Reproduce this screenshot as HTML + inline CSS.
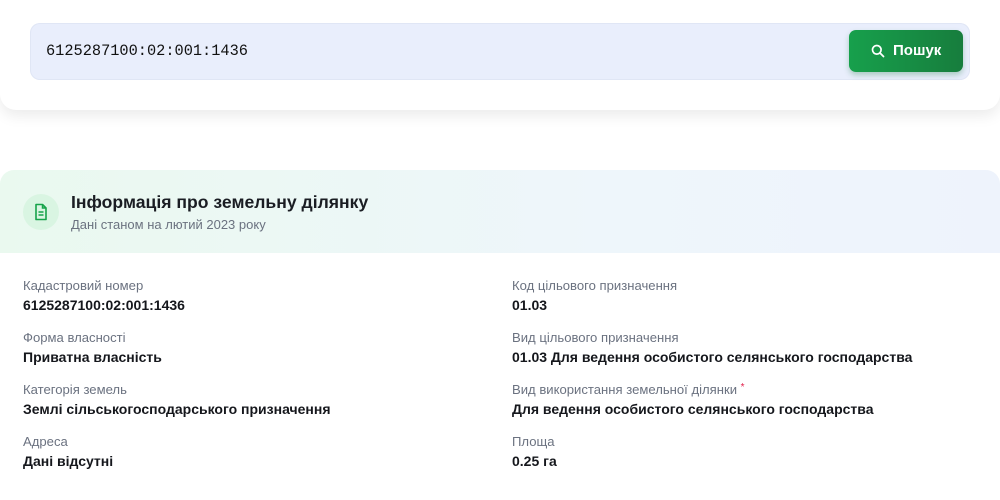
<!DOCTYPE html>
<html><head><meta charset="utf-8"><style>
*{margin:0;padding:0;box-sizing:border-box}
body{width:1000px;height:483px;overflow:hidden;background:#fff;font-family:"Liberation Sans",sans-serif;position:relative}
.top{position:absolute;left:0;top:-20px;width:1000px;height:130px;background:#fff;border-radius:16px;box-shadow:0 6px 14px rgba(0,0,0,0.08)}
.inp{position:absolute;left:30px;top:23px;width:940px;height:57px;background:#e9eefc;border-radius:10px;box-shadow:inset 0 0 0 1px #e0e6f5}
.inp span{position:absolute;left:16px;top:19px;font-family:"Liberation Mono",monospace;font-size:15.3px;color:#111}
.btn{position:absolute;left:849px;top:30px;width:114px;height:42px;border-radius:7px;background:linear-gradient(90deg,#17a04c,#177d3d);box-shadow:0 3px 6px rgba(22,120,60,0.3);color:#fff;font-weight:bold;font-size:15px}
.btn svg{position:absolute;left:22px;top:14px}
.btn b{position:absolute;left:44px;top:12px}
.card{position:absolute;left:0;top:170px;width:1000px;height:330px;border-radius:14px;background:#fff}
.hd{position:absolute;left:0;top:0;width:1000px;height:83px;border-radius:14px 14px 0 0;background:linear-gradient(90deg,#eaf9ef,#eef6fb 60%,#eef3fc)}
.ic{position:absolute;left:23px;top:24px;width:36px;height:36px;border-radius:50%;background:#d9f5e2}
.ic svg{position:absolute;left:10px;top:9px}
.t{position:absolute;left:71px;top:22px;font-size:17.6px;font-weight:bold;color:#1a1d23}
.s{position:absolute;left:71px;top:47px;font-size:13px;color:#6b7280}
.f{position:absolute}
.f .l{font-size:13.1px;color:#6b7280;height:19px}
.f .v{font-size:14px;font-weight:bold;color:#15171c}
.star{color:#e11d48;font-size:10px;vertical-align:top}
</style></head><body>
<div class="top"></div>
<div class="inp"><span>6125287100:02:001:1436</span></div>
<div class="btn"><svg width="14" height="14" viewBox="0 0 14 14"><circle cx="5.8" cy="5.8" r="4.3" fill="none" stroke="#fff" stroke-width="1.7"/><path d="M9 9l3.5 3.5" stroke="#fff" stroke-width="1.8" stroke-linecap="round"/></svg><b>Пошук</b></div>
<div class="card">
<div class="hd">
<div class="ic"><svg width="16" height="18" viewBox="0 0 16 18"><path d="M3 1.5h6.5L13 5v11.5H3z" fill="none" stroke="#16a34a" stroke-width="1.6" stroke-linejoin="round"/><path d="M9.5 1.5V5H13M5.5 9h5M5.5 12h5" stroke="#16a34a" stroke-width="1.5" fill="none"/></svg></div>
<div class="t">Інформація про земельну ділянку</div>
<div class="s">Дані станом на лютий 2023 року</div>
</div>
</div>
<div class="f" style="left:23px;top:278px"><div class="l">Кадастровий номер</div><div class="v">6125287100:02:001:1436</div></div>
<div class="f" style="left:23px;top:330px"><div class="l">Форма власності</div><div class="v">Приватна власність</div></div>
<div class="f" style="left:23px;top:382px"><div class="l">Категорія земель</div><div class="v">Землі сільськогосподарського призначення</div></div>
<div class="f" style="left:23px;top:434px"><div class="l">Адреса</div><div class="v">Дані відсутні</div></div>
<div class="f" style="left:512px;top:278px"><div class="l">Код цільового призначення</div><div class="v">01.03</div></div>
<div class="f" style="left:512px;top:330px"><div class="l">Вид цільового призначення</div><div class="v">01.03 Для ведення особистого селянського господарства</div></div>
<div class="f" style="left:512px;top:382px"><div class="l">Вид використання земельної ділянки <span class="star">*</span></div><div class="v">Для ведення особистого селянського господарства</div></div>
<div class="f" style="left:512px;top:434px"><div class="l">Площа</div><div class="v">0.25 га</div></div>
</body></html>
